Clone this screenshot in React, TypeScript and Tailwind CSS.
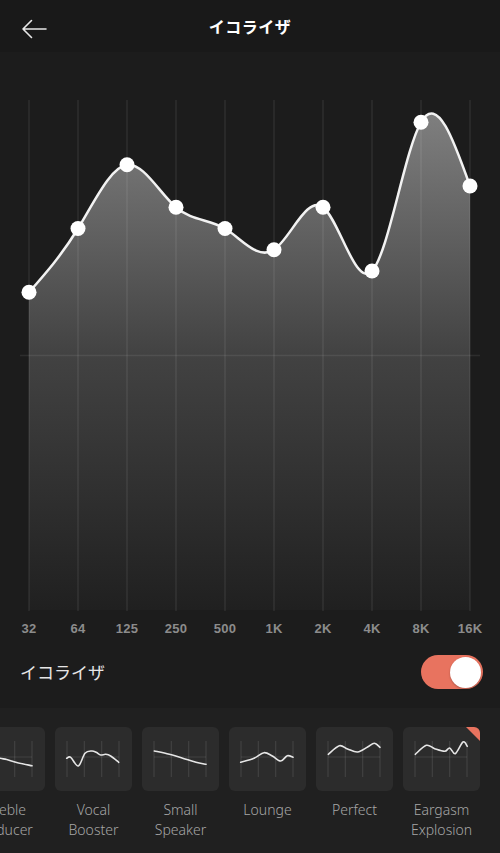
import React from "react";

type Pt = [number, number];

function naturalSplinePath(pts: Pt[]): string {
  const n = pts.length - 1;
  const h = pts[1][0] - pts[0][0];
  const y = pts.map((p) => p[1]);
  const M = new Array(n + 1).fill(0);
  const a: number[] = [];
  const b: number[] = [];
  const c: number[] = [];
  const d: number[] = [];
  for (let i = 1; i < n; i++) {
    a.push(1);
    b.push(4);
    c.push(1);
    d.push((6 * (y[i + 1] - 2 * y[i] + y[i - 1])) / (h * h));
  }
  const m = d.length;
  const cp = new Array(m).fill(0);
  const dp = new Array(m).fill(0);
  for (let i = 0; i < m; i++) {
    const denom = b[i] - (i > 0 ? a[i] * cp[i - 1] : 0);
    cp[i] = c[i] / denom;
    dp[i] = (d[i] - (i > 0 ? a[i] * dp[i - 1] : 0)) / denom;
  }
  const sol = new Array(m).fill(0);
  for (let i = m - 1; i >= 0; i--) {
    sol[i] = dp[i] - (i < m - 1 ? cp[i] * sol[i + 1] : 0);
  }
  for (let i = 1; i < n; i++) M[i] = sol[i - 1];
  const D: number[] = [];
  for (let i = 0; i < n; i++) {
    D.push((y[i + 1] - y[i]) / h - (h * (2 * M[i] + M[i + 1])) / 6);
  }
  D.push((y[n] - y[n - 1]) / h + (h * (M[n - 1] + 2 * M[n])) / 6);
  let s = `M ${pts[0][0]} ${pts[0][1]}`;
  for (let i = 0; i < n; i++) {
    const [x0, y0] = pts[i];
    const [x1, y1] = pts[i + 1];
    s += ` C ${x0 + h / 3} ${y0 + (D[i] * h) / 3} ${x1 - h / 3} ${y1 - (D[i + 1] * h) / 3} ${x1} ${y1}`;
  }
  return s;
}

function smoothPath(pts: Pt[]): string {
  let s = `M ${pts[0][0]} ${pts[0][1]}`;
  for (let i = 0; i < pts.length - 1; i++) {
    const p0 = pts[i - 1] || pts[i];
    const p1 = pts[i];
    const p2 = pts[i + 1];
    const p3 = pts[i + 2] || p2;
    const c1x = p1[0] + (p2[0] - p0[0]) / 6;
    const c1y = p1[1] + (p2[1] - p0[1]) / 6;
    const c2x = p2[0] - (p3[0] - p1[0]) / 6;
    const c2y = p2[1] - (p3[1] - p1[1]) / 6;
    s += ` C ${c1x} ${c1y} ${c2x} ${c2y} ${p2[0]} ${p2[1]}`;
  }
  return s;
}

const bands = ["32", "64", "125", "250", "500", "1K", "2K", "4K", "8K", "16K"];
const values = [3, 6, 9, 7, 6, 5, 7, 4, 11, 8];

const presets: { name: React.ReactNode; pts: Pt[]; badge?: boolean }[] = [
  {
    name: (
      <>
        Treble
        <br />
        Reducer
      </>
    ),
    pts: [
      [12, 27],
      [22, 28.5],
      [32, 31.3],
      [38.7, 32.5],
      [48.7, 35.5],
      [64, 38.8],
    ],
  },
  {
    name: (
      <>
        Vocal
        <br />
        Booster
      </>
    ),
    pts: [
      [11.7, 31.3],
      [15.7, 30.3],
      [23.3, 39],
      [30, 26.3],
      [36.7, 24],
      [41.3, 25.3],
      [45.7, 28],
      [50.7, 27.3],
      [55.7, 29],
      [63.7, 35.3],
    ],
  },
  {
    name: (
      <>
        Small
        <br />
        Speaker
      </>
    ),
    pts: [
      [12.3, 24],
      [27.3, 27.3],
      [44, 32.3],
      [54, 35.3],
      [64, 37.3],
    ],
  },
  {
    name: <>Lounge</>,
    pts: [
      [11.7, 35.3],
      [25, 31.3],
      [35, 25.7],
      [43.3, 29],
      [51.7, 34],
      [58.3, 28.7],
      [64, 30.3],
    ],
  },
  {
    name: <>Perfect</>,
    pts: [
      [12.3, 27.3],
      [23.3, 18.7],
      [31.6, 22],
      [41.6, 25],
      [51.6, 20],
      [58.3, 16.3],
      [64, 20.3],
    ],
  },
  {
    name: (
      <>
        Eargasm
        <br />
        Explosion
      </>
    ),
    pts: [
      [12.3, 27.3],
      [23.3, 18.3],
      [31.7, 21.7],
      [41.7, 24.3],
      [46.7, 21],
      [52.3, 26.7],
      [60, 15],
      [64.3, 19.3],
    ],
    badge: true,
  },
];

function PresetTile({ pts, badge }: { pts: Pt[]; badge?: boolean }) {
  const xs = [12, 29.3, 46.7, 64];
  return (
    <div className="relative w-[77px] h-[64px] rounded-[6px] bg-[#2c2c2c] overflow-hidden">
      <svg width="77" height="64" viewBox="0 0 77 64" className="block">
        {xs.map((x) => (
          <line key={x} x1={x} y1={14} x2={x} y2={50} stroke="rgba(255,255,255,0.1)" strokeWidth={1.2} />
        ))}
        <line x1={12} y1={30} x2={64} y2={30} stroke="rgba(255,255,255,0.1)" strokeWidth={1.2} />
        <path d={smoothPath(pts)} fill="none" stroke="#e6e6e6" strokeWidth={1.6} strokeLinecap="round" />
        {badge && <polygon points="63,0 77,0 77,14" fill="#e8735f" />}
      </svg>
    </div>
  );
}

export default function App() {
  const pts: Pt[] = values.map((v, i) => [29 + 49 * i, 356 - v * 21.25]);
  const line = naturalSplinePath(pts);
  const fill = `${line} L 470 610 L 29 610 Z`;
  const jp = { fontFamily: '"Noto Sans CJK JP", "Noto Sans", sans-serif' };

  return (
    <div className="w-[500px] h-[853px] bg-[#1c1c1c] flex flex-col overflow-hidden">
      {/* header */}
      <div className="relative h-[52px] bg-[#191919] flex items-center justify-center shrink-0">
        <svg className="absolute left-[20px] top-[18px]" width="28" height="22" viewBox="0 0 28 22">
          <path d="M3 11 H26 M11.5 2.5 L3 11 L11.5 19.5" fill="none" stroke="#e8e8e8" strokeWidth="1.6" strokeLinecap="round" strokeLinejoin="round" />
        </svg>
        <span className="text-white text-[16px] font-bold tracking-[0.5px]" style={jp}>
          イコライザ
        </span>
      </div>

      {/* chart */}
      <svg width="500" height="560" viewBox="0 52 500 560" className="block shrink-0">
        <defs>
          <linearGradient id="fillg" x1="0" y1="100" x2="0" y2="610" gradientUnits="userSpaceOnUse">
            <stop offset="0" stopColor="#828282" />
            <stop offset="0.5" stopColor="#424242" />
            <stop offset="1" stopColor="#202020" />
          </linearGradient>
        </defs>
        <path d={fill} fill="url(#fillg)" />
        {pts.map((p) => (
          <line key={p[0]} x1={p[0]} y1={100} x2={p[0]} y2={611} stroke="rgba(255,255,255,0.08)" strokeWidth={1.5} />
        ))}
        <line x1={20} y1={355.5} x2={480} y2={355.5} stroke="rgba(255,255,255,0.08)" strokeWidth={1.5} />
        <path d={line} fill="none" stroke="#f2f2f2" strokeWidth={2.5} />
        {pts.map((p) => (
          <circle key={`c${p[0]}`} cx={p[0]} cy={p[1]} r={7.5} fill="#ffffff" />
        ))}
      </svg>

      {/* band labels */}
      <div className="h-[33px] flex items-center pl-[4.5px] shrink-0">
        {bands.map((b) => (
          <div
            key={b}
            className="w-[49px] text-center text-[13px] font-bold text-[#8c8c8c] tracking-[0.3px]"
            style={{ fontFamily: '"Liberation Sans", Arial, sans-serif' }}
          >
            {b}
          </div>
        ))}
      </div>

      {/* toggle row */}
      <div className="h-[63px] flex items-center justify-between pl-[20px] pr-[17px] pb-[9px] shrink-0">
        <span className="text-[17px] text-[#e6e6e6]" style={jp}>
          イコライザ
        </span>
        <div className="w-[62px] h-[34px] rounded-full bg-[#e8735f] flex items-center justify-end p-[2px]">
          <div className="w-[31px] h-[31px] rounded-full bg-white shadow-[0_1px_2px_rgba(0,0,0,0.25)]" />
        </div>
      </div>

      {/* presets */}
      <div className="flex-1 bg-[#202020] overflow-hidden pt-[19px]">
        <div className="flex gap-[10px] ml-[-32px]">
          {presets.map((p, i) => (
            <div key={i} className="w-[77px] shrink-0 flex flex-col items-center">
              <PresetTile pts={p.pts} badge={p.badge} />
              <div
                className="mt-[9px] text-[14px] leading-[20px] font-light text-[#a6a6a6] text-center whitespace-nowrap"
                style={{ fontFamily: '"Noto Sans", "Open Sans", sans-serif' }}
              >
                {p.name}
              </div>
            </div>
          ))}
        </div>
      </div>
    </div>
  );
}
